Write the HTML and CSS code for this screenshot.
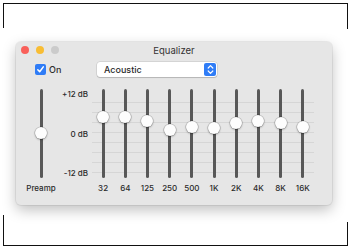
FILE: index.html
```html
<!DOCTYPE html>
<html lang="en">
<head>
<meta charset="UTF-8">
<title>Equalizer</title>
<link rel="stylesheet" href="styles.css">
</head>
<body>
<div class="frame">
    <div class="window">
        <div class="titlebar">
            <div class="lights">
                <span class="light red"></span>
                <span class="light yellow"></span>
                <span class="light grey"></span>
            </div>
            <div class="title">Equalizer</div>
        </div>
        <div class="controls">
            <label class="check">
                <span class="box">
                    <svg width="9" height="9" viewBox="0 0 9 9"><path d="M1.8 4.8 L3.7 6.8 L7.3 1.9" fill="none" stroke="#fff" stroke-width="1.5" stroke-linecap="round" stroke-linejoin="round"/></svg>
                </span>
                On
            </label>
            <div class="popup">
                <span>Acoustic</span>
                <span class="stepper">
                    <svg width="7" height="11" viewBox="0 0 7 11"><path d="M1.2 4 L3.5 1.7 L5.8 4 M1.2 7 L3.5 9.3 L5.8 7" fill="none" stroke="#fff" stroke-width="1.2" stroke-linecap="round" stroke-linejoin="round"/></svg>
                </span>
            </div>
        </div>
        <div class="sliders">
            <div class="preamp">
                <div class="track"><span class="knob" style="top:44px"></span></div>
                <div class="label">Preamp</div>
            </div>
            <div class="scale">
                <span>+12 dB</span>
                <span>0 dB</span>
                <span>-12 dB</span>
            </div>
            <div class="bands">
                <div class="band"><div class="track"><span class="knob" style="top:28px"></span></div><div class="label">32</div></div>
                <div class="band"><div class="track"><span class="knob" style="top:28px"></span></div><div class="label">64</div></div>
                <div class="band"><div class="track"><span class="knob" style="top:32px"></span></div><div class="label">125</div></div>
                <div class="band"><div class="track"><span class="knob" style="top:41px"></span></div><div class="label">250</div></div>
                <div class="band"><div class="track"><span class="knob" style="top:38px"></span></div><div class="label">500</div></div>
                <div class="band"><div class="track"><span class="knob" style="top:39px"></span></div><div class="label">1K</div></div>
                <div class="band"><div class="track"><span class="knob" style="top:34px"></span></div><div class="label">2K</div></div>
                <div class="band"><div class="track"><span class="knob" style="top:32px"></span></div><div class="label">4K</div></div>
                <div class="band"><div class="track"><span class="knob" style="top:34px"></span></div><div class="label">8K</div></div>
                <div class="band"><div class="track"><span class="knob" style="top:38px"></span></div><div class="label">16K</div></div>
            </div>
        </div>
    </div>
</div>
</body>
</html>
```

FILE: styles.css
```css
body {
    margin: 0;
    background: #fff;
    font-family: Inter, "Liberation Sans", sans-serif;
    color: #2b2b2b;
    overflow: hidden;
}
.frame {
    margin: 3px;
    width: 345px;
    height: 243px;
    border-top: 1px solid #111;
    border-bottom: 1px solid #111;
    padding-top: 38px;
    box-sizing: border-box;
    background:
        linear-gradient(#111, #111) left top / 1px 25px no-repeat,
        linear-gradient(#111, #111) left bottom / 1px 31px no-repeat,
        linear-gradient(#111, #111) right top / 1px 26px no-repeat,
        linear-gradient(#111, #111) right bottom / 1px 24px no-repeat;
    background-origin: border-box;
}
.window {
    width: 316px;
    height: 163px;
    margin-left: 13px;
    background: #e6e6e6;
    border-radius: 5px;
    box-shadow: 0 0 0 1px rgba(0, 0, 0, 0.06), 0 5px 14px rgba(0, 0, 0, 0.25);
    box-sizing: border-box;
}
.titlebar {
    height: 16px;
    position: relative;
    display: flex;
    align-items: center;
    justify-content: center;
}
.lights {
    position: absolute;
    left: 5px;
    top: 4px;
    display: flex;
    gap: 7px;
}
.light {
    width: 8px;
    height: 8px;
    border-radius: 50%;
}
.red { background: #f9605a; }
.yellow { background: #f8bd34; }
.grey { background: #cbcbcb; }
.title {
    font-size: 9.5px;
    color: #333;
    padding-top: 1px;
}
.controls {
    display: flex;
    align-items: center;
    height: 15px;
    margin-top: 4px;
    padding-left: 19px;
}
.check {
    display: flex;
    align-items: center;
    gap: 3px;
    font-size: 9px;
    font-weight: 500;
    width: 62px;
}
.box {
    width: 11px;
    height: 11px;
    border-radius: 2px;
    background: #2f7cf6;
    display: flex;
    align-items: center;
    justify-content: center;
}
.popup {
    width: 120px;
    height: 15px;
    background: #fff;
    border-radius: 3px;
    box-shadow: 0 0 0 0.5px rgba(0, 0, 0, 0.15), 0 1px 1px rgba(0, 0, 0, 0.15);
    display: flex;
    align-items: center;
    justify-content: space-between;
    padding: 0 1px 0 7px;
    box-sizing: border-box;
    font-size: 9px;
    font-weight: 500;
}
.stepper {
    width: 12px;
    height: 13px;
    background: #2f7cf6;
    border-radius: 2px;
    display: flex;
    align-items: center;
    justify-content: center;
}
.sliders {
    display: flex;
    margin-top: 12px;
    padding-left: 5px;
}
.preamp,
.band {
    display: flex;
    flex-direction: column;
    align-items: center;
}
.preamp {
    width: 40px;
}
.band {
    width: 22.2px;
}
.track {
    position: relative;
    width: 3px;
    height: 89px;
    background: #585858;
    border-radius: 2px;
}
.knob {
    position: absolute;
    left: -4.5px;
    width: 12px;
    height: 12px;
    margin-top: -6px;
    border-radius: 50%;
    background: #fdfdfd;
    box-shadow: 0 0 0 0.5px rgba(0, 0, 0, 0.25), 0 1px 2px rgba(0, 0, 0, 0.3);
}
.label {
    margin-top: 5px;
    font-size: 8px;
    line-height: 10px;
    font-weight: 500;
    white-space: nowrap;
}
.scale {
    width: 27px;
    height: 89px;
    display: flex;
    flex-direction: column;
    justify-content: space-between;
    align-items: flex-end;
    font-size: 8px;
    font-weight: 500;
    line-height: 10px;
}
.bands {
    display: flex;
    margin-left: 4px;
    height: 104px;
    background: repeating-linear-gradient(180deg, transparent 0, transparent 9px, #d6d6d6 9px, #d6d6d6 10px) 0 4px / 100% 81px no-repeat;
}
```
